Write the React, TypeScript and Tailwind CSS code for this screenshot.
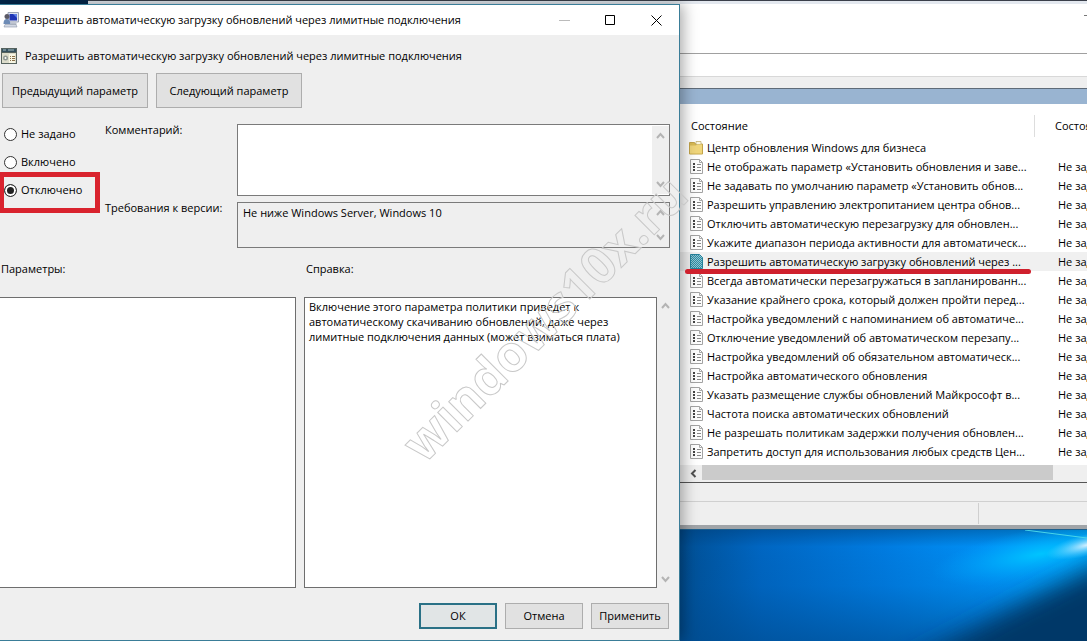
import React, { useState } from 'react';

const TITLE = 'Разрешить автоматическую загрузку обновлений через лимитные подключения';

const STATES = [
    { id: 'unset', label: 'Не задано' },
    { id: 'on', label: 'Включено' },
    { id: 'off', label: 'Отключено' },
];

const POLICIES = [
    'Не отображать параметр «Установить обновления и заве...',
    'Не задавать по умолчанию параметр «Установить обнов...',
    'Разрешить управлению электропитанием центра обнов...',
    'Отключить автоматическую перезагрузку для обновлен...',
    'Укажите диапазон периода активности для автоматическ...',
    'Разрешить автоматическую загрузку обновлений через ...',
    'Всегда автоматически перезагружаться в запланированн...',
    'Указание крайнего срока, который должен пройти перед...',
    'Настройка уведомлений с напоминанием об автоматиче...',
    'Отключение уведомлений об автоматическом перезапу...',
    'Настройка уведомлений об обязательном автоматическ...',
    'Настройка автоматического обновления',
    'Указать размещение службы обновлений Майкрософт в...',
    'Частота поиска автоматических обновлений',
    'Не разрешать политикам задержки получения обновлен...',
    'Запретить доступ для использования любых средств Цен...',
];

const SELECTED = 5;

const Chevron: React.FC<{ down?: boolean }> = ({ down }) => (
    <svg width="9" height="7" viewBox="0 0 9 7" fill="none" stroke="#b4b4b4" strokeWidth="2">
        <path d={down ? 'M1 1l3.5 4L8 1' : 'M1 6l3.5-4L8 6'} />
    </svg>
);

const ComputerIcon: React.FC = () => (
    <svg width="16" height="16" viewBox="0 0 16 16" className="shrink-0">
        <path d="M5 0.5h10.5v9.5H5z" fill="#dfe3ee" stroke="#9aa3b5" />
        <path d="M6.5 2h7.5v6.5H6.5z" fill="#1f35b5" />
        <path d="M10 2h4v4z" fill="#5c7fe6" />
        <path d="M8 10.5h5l1 2H7z" fill="#b9bfcb" />
        <circle cx="4" cy="4.5" r="2.5" fill="#5b5a66" />
        <path d="M0.5 12c0-4 1.500-5 3.500-5s3 1.500 3.500 5z" fill="#6d8bb5" />
        <path d="M2 12.500h11l1 2.500H1z" fill="#d3d9e4" stroke="#8c96a8" strokeWidth="0.6" />
    </svg>
);

const PolicyIcon: React.FC = () => (
    <svg width="16" height="16" viewBox="0 0 16 16" className="shrink-0">
        <path d="M0 0h16v16H0z" fill="#56635f" />
        <path d="M1 1h14v3H1z" fill="#35505f" />
        <path d="M2 2h3M7 2h6" stroke="#a9c2c4" />
        <path d="M1 5h14v10H1z" fill="#dcdccb" />
        <path d="M8 6h6v9H8z" fill="#f7f6e4" />
        <circle cx="4.500" cy="10" r="2.500" fill="#8d9692" />
        <circle cx="4.500" cy="10" r="1" fill="#fff" />
        <path d="M9 8.500h1M11 8.500h3M9 10.500h1M11 10.500h3M9 12.500h1M11 12.500h3" stroke="#8a6f4a" />
    </svg>
);

const FolderIcon: React.FC = () => (
    <svg width="14" height="14" viewBox="0 0 14 14" className="shrink-0">
        <path d="M0.500 1.500h5l1 1.500h7v10H0.500z" fill="#d9bb55" stroke="#c3a44a" />
        <path d="M7 0.500h5v3H7z" fill="#fbf7e3" stroke="#b8a565" strokeWidth="0.7" />
        <path d="M1 4.500h6l1-1h5v9H1z" fill="#f0d67c" />
    </svg>
);

const SettingIcon: React.FC<{ selected?: boolean }> = ({ selected }) => (
    <svg width="14" height="15" viewBox="0 0 14 15" className="shrink-0">
        <path d="M0.500 0.500h9l3 3v11H0.500z" fill={selected ? '#2f8ba3' : '#fdfdfd'} stroke={selected ? '#24809a' : '#a3a3a3'} />
        {selected ? (
            <>
                <path d="M1.500 1v13M3.500 1v13M5.500 1v13M7.500 1v13M9.500 1v13M11.500 3v11" stroke="#8fc6d3" strokeDasharray="1 1" />
                <path d="M2.500 2v12M4.500 2v12M6.500 2v12M8.500 2v12M10.500 2v12" stroke="#8fc6d3" strokeDasharray="1 1" />
            </>
        ) : (
            <>
                <path d="M9.500 0.500v3h3" fill="none" stroke="#aaa" />
                <path d="M3 4h2v2H3zM3 7h2v2H3zM3 10h2v2H3z" fill="#444" />
                <path d="M7 5.500h4M7 8.500h4M7 11.500h4" stroke="#8a8a8a" />
            </>
        )}
    </svg>
);

const Wallpaper: React.FC = () => (
    <svg className="block h-full w-full" viewBox="0 0 407 111" preserveAspectRatio="none">
        <defs>
            <linearGradient id="sky" x1="0" x2="1" y1="0" y2="0">
                <stop offset="0" stopColor="#004f94" />
                <stop offset="0.2" stopColor="#0066c2" />
                <stop offset="0.5" stopColor="#007be0" />
                <stop offset="0.75" stopColor="#008ff4" />
                <stop offset="1" stopColor="#00a8ff" />
            </linearGradient>
            <linearGradient id="fade" x1="0" x2="0" y1="0" y2="1">
                <stop offset="0" stopColor="#003a70" stopOpacity="0.4" />
                <stop offset="0.15" stopColor="#003a70" stopOpacity="0" />
                <stop offset="0.5" stopColor="#004a8c" stopOpacity="0.1" />
                <stop offset="1" stopColor="#004a8c" stopOpacity="0.6" />
            </linearGradient>
            <radialGradient id="glow">
                <stop offset="0" stopColor="#00c4ff" />
                <stop offset="1" stopColor="#00a2ff" stopOpacity="0" />
            </radialGradient>
            <radialGradient id="flare">
                <stop offset="0" stopColor="#d4f0ff" />
                <stop offset="1" stopColor="#59cfff" stopOpacity="0" />
            </radialGradient>
            <filter id="soft" x="-30%" y="-40%" width="160%" height="180%">
                <feGaussianBlur stdDeviation="12" />
            </filter>
        </defs>
        <rect width="407" height="111" fill="url(#sky)" />
        <rect width="407" height="111" fill="url(#fade)" />
        <ellipse cx="360" cy="24" rx="110" ry="26" fill="url(#glow)" transform="rotate(-10 360 24)" />
        <path d="M450 18L345 72L215 140H450z" fill="#003768" filter="url(#soft)" />
        <ellipse cx="407" cy="15" rx="42" ry="11" fill="url(#flare)" transform="rotate(-14 407 15)" />
        <path d="M345 0l62 8" stroke="#49d5e8" strokeWidth="1" />
    </svg>
);

const PolicyDialog: React.FC = () => {
    const [state, setState] = useState('off');
    const [comment, setComment] = useState('');

    return (
        <section className="relative z-10 flex w-[680px] shrink-0 flex-col border-t border-r border-b border-[#3a7d98] bg-[#efefef] shadow-[3px_0_14px_rgba(0,0,0,0.35)]">
            <header className="flex h-[30px] items-center bg-white pl-[3px]">
                <ComputerIcon />
                <h1 className="ml-[5px] flex-1 whitespace-nowrap">{TITLE}</h1>
                <button aria-label="Свернуть" className="flex h-full w-[46px] items-center justify-center">
                    <svg width="11" height="11" viewBox="0 0 11 11"><path d="M0 5.500h11" stroke="#bbb" /></svg>
                </button>
                <button aria-label="Развернуть" className="flex h-full w-[46px] items-center justify-center">
                    <svg width="11" height="11" viewBox="0 0 11 11"><path d="M0.500 0.500h9v9h-9z" fill="none" stroke="#000" /></svg>
                </button>
                <button aria-label="Закрыть" className="flex h-full w-[46px] items-center justify-center">
                    <svg width="11" height="11" viewBox="0 0 11 11"><path d="M0.500 0.500l10 10M10.500 0.500l-10 10" stroke="#000" /></svg>
                </button>
            </header>

            <div className="flex items-center gap-2 pt-[13px] pl-px">
                <PolicyIcon />
                <h2 className="whitespace-nowrap">{TITLE}</h2>
            </div>

            <div className="mt-[9px] flex gap-2 pl-[2px]">
                <button className="h-[35px] w-[146px] border border-[#adadad] bg-[#e1e1e1]">Предыдущий параметр</button>
                <button className="h-[35px] w-[146px] border border-[#adadad] bg-[#e1e1e1]">Следующий параметр</button>
            </div>

            {/* State, comment and supported versions */}
            <div className="mt-4 flex pr-[9px]">
                <fieldset className="-mt-1 w-[105px]">
                    {STATES.map(s => (
                        <label
                            key={s.id}
                            className={`relative flex h-7 items-center gap-1 pl-1 ${s.id === 'off' ? 'after:absolute after:-top-[4px] after:left-0 after:h-[41px] after:w-[100px] after:border-[5px] after:border-l-4 after:border-[#d9232e]' : ''}`}
                        >
                            <input
                                type="radio"
                                name="state"
                                checked={state === s.id}
                                onChange={() => setState(s.id)}
                                className="h-[13px] w-[13px] appearance-none rounded-full border border-[#333] bg-white checked:bg-[#222] checked:shadow-[inset_0_0_0_2px_white]"
                            />
                            {s.label}
                        </label>
                    ))}
                </fieldset>
                <div className="grid flex-1 grid-cols-[132px_1fr] gap-y-[6px]">
                    <label htmlFor="comment" className="-mt-[2px]">Комментарий:</label>
                    <div className="flex h-[72px] border border-[#7a7a7a] bg-white">
                        <textarea
                            id="comment"
                            value={comment}
                            onChange={e => setComment(e.target.value)}
                            className="min-w-0 flex-1 resize-none px-[5px] outline-none"
                        />
                        <div className="my-px flex w-[17px] flex-col items-center justify-between bg-[#efefef] py-[6px]">
                            <Chevron />
                            <Chevron down />
                        </div>
                    </div>
                    <label htmlFor="supported" className="-mt-[2px]">Требования к версии:</label>
                    <div className="flex h-[46px] border border-[#7a7a7a]">
                        <textarea
                            id="supported"
                            readOnly
                            value="Не ниже Windows Server, Windows 10"
                            className="min-w-0 flex-1 resize-none px-[5px] pt-[2px] outline-none"
                        />
                        <div className="flex w-[17px] flex-col items-center justify-between py-[6px]">
                            <Chevron />
                            <Chevron down />
                        </div>
                    </div>
                </div>
            </div>

            <div className="mt-[13px] grid flex-1 grid-cols-[296px_1fr] grid-rows-[auto_1fr] gap-x-2">
                <h3 className="pl-px">Параметры:</h3>
                <h3 className="pl-[2px]">Справка:</h3>
                <div className="mt-5 border-y border-r border-[#6e6e6e] bg-white" />
                <div className="mt-5 flex">
                    <p className="flex-1 border border-[#6e6e6e] bg-white px-1 pt-px leading-[15px]">
                        Включение этого параметра политики приведет к<br />
                        автоматическому скачиванию обновлений, даже через<br />
                        лимитные подключения данных (может взиматься плата)
                    </p>
                    <div className="mr-[5px] flex w-[17px] flex-col items-center justify-between py-[5px]">
                        <Chevron />
                        <Chevron down />
                    </div>
                </div>
            </div>

            <footer className="mt-[15px] mb-[11px] flex justify-end gap-2 pr-[10px]">
                <button className="h-[26px] w-[78px] border-2 border-[#2a7186] bg-[#e1e5e6]">ОК</button>
                <button className="h-[26px] w-[78px] border border-[#adadad] bg-[#e1e1e1]">Отмена</button>
                <button className="h-[26px] w-[78px] border border-[#adadad] bg-[#e1e1e1]">Применить</button>
            </footer>
        </section>
    );
};

const PolicyTable: React.FC = () => (
    <table className="w-full table-fixed border-collapse text-left">
        <colgroup>
            <col className="w-[355px]" />
            <col />
        </colgroup>
        <thead>
            <tr className="h-[34px]">
                <th className="p-0 pb-px align-bottom font-normal">
                    <div className="flex h-[22px] items-center border-r border-[#ddd] pl-[11px]">Состояние</div>
                </th>
                <th className="p-0 pb-1 pl-5 align-bottom font-normal whitespace-nowrap">Состояние</th>
            </tr>
        </thead>
        <tbody>
            <tr className="h-[19px]">
                <td className="p-0">
                    <div className="flex items-center gap-1 pl-[9px] whitespace-nowrap"><FolderIcon />Центр обновления Windows для бизнеса</div>
                </td>
                <td />
            </tr>
            {POLICIES.map((name, i) => (
                <tr key={name} className={i === SELECTED ? 'h-[19px] bg-[#f0f0f0]' : 'h-[19px]'}>
                    <td className="relative p-0">
                        <div className="flex items-center gap-[3px] pl-[10px] whitespace-nowrap">
                            <SettingIcon selected={i === SELECTED} />
                            {name}
                        </div>
                        {i === SELECTED && <div className="absolute top-[17px] left-[5px] z-10 h-[5px] w-[346px] rounded-full bg-[#cf202d]" />}
                    </td>
                    <td className="p-0 pl-[23px] whitespace-nowrap">Не задана</td>
                </tr>
            ))}
        </tbody>
    </table>
);

const EditorWindow: React.FC = () => (
    <section className="flex flex-col bg-[#efefef]">
        <header className="flex h-[50px] justify-end border-b border-[#a0a0a0] bg-white">
            <svg width="3" height="12" viewBox="0 0 3 12"><path d="M0 11.500h3" stroke="#777" /></svg>
        </header>
        <div className="h-[23px] border-b border-[#d8d8d8] bg-white" />
        <div className="h-[11px]" />
        <div className="h-4 border-t border-[#5f6b78] bg-[#99b4d1]" />
        <div className="h-[361px] overflow-hidden bg-white">
            <PolicyTable />
        </div>
        <div className="flex h-[18px] items-start border-b border-[#555]">
            <button aria-label="Прокрутить влево" className="flex h-4 w-[22px] items-center justify-center pl-[4px]">
                <svg width="7" height="9" viewBox="0 0 7 9"><path d="M5.500 1L2 4.500L5.500 8" fill="none" stroke="#505050" strokeWidth="2" /></svg>
            </button>
            <div className="mr-[34px] h-[15px] flex-1 bg-[#cbcbcb]" />
        </div>
        <div className="h-[19px] border-b border-[#d0d0d0]" />
        <div className="flex h-[23px] py-px">
            <div className="flex-1 border-r border-[#cfcfcf]" />
            <div className="w-[108px]" />
        </div>
        <div className="h-[5px] border-b border-[#1c5f8d] bg-[#a0a4a8]" />
    </section>
);

const App: React.FC = () => (
    <main className="relative flex min-h-screen flex-col overflow-hidden bg-[#004a8c] font-['Open_Sans','Noto_Sans',sans-serif] text-[11px] leading-4 text-black">
        <div className="flex h-1">
            <div className="w-[88px] bg-[#04274b]" />
            <div className="flex-1 border-t border-[#3a3f4a] bg-[#e3e8ef]" />
        </div>
        <div className="flex flex-1 pb-px">
            <PolicyDialog />
            <div className="flex min-w-0 flex-1 flex-col">
                <EditorWindow />
                <div className="min-h-0 flex-1">
                    <Wallpaper />
                </div>
            </div>
        </div>

        <div className="pointer-events-none absolute top-[288px] left-[344px] z-20 w-[400px] -rotate-45 text-center text-[50px] leading-[60px] font-bold text-transparent [-webkit-text-stroke:1px_#c8c8c8]">
            windows10x.ru
        </div>
    </main>
);

export default App;
